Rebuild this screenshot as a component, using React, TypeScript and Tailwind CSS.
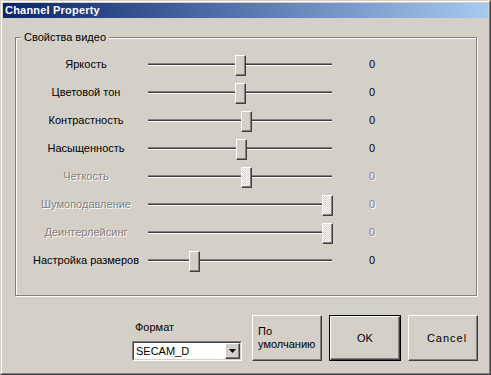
import React from "react";

type Row = { label: string; thumb: number; disabled?: boolean };

const rows: Row[] = [
  { label: "Яркость", thumb: 87 },
  { label: "Цветовой тон", thumb: 87 },
  { label: "Контрастность", thumb: 93 },
  { label: "Насыщенность", thumb: 88 },
  { label: "Четкость", thumb: 93, disabled: true },
  { label: "Шумоподавление", thumb: 174, disabled: true },
  { label: "Деинтерлейсинг", thumb: 174, disabled: true },
  { label: "Настройка размеров", thumb: 41 },
];

function Slider({ row }: { row: Row }) {
  return (
    <div className="relative w-[184px] h-[28px] flex items-center">
      <div className="w-full h-[3px] border-t border-b border-t-[#808080] border-b-white bg-[#404040]" />
      <div
        className={
          "absolute top-[5px] w-[11px] h-[21px] border border-t-white border-l-white border-r-[#404040] border-b-[#404040] shadow-[inset_-1px_-1px_0_#808080] " +
          (row.disabled
            ? "bg-[image:repeating-conic-gradient(#ffffff_0_25%,#d4d0c8_0_50%)] bg-[length:2px_2px]"
            : "bg-[#d4d0c8]")
        }
        style={{ left: row.thumb }}
      />
    </div>
  );
}

export default function App() {
  const disabledText = "text-[#808080] [text-shadow:1px_1px_0_#ffffff]";
  return (
    <div className="w-[491px] h-[375px] bg-[#d4d0c8] font-['Liberation_Sans',Arial,sans-serif] text-[11px] leading-[13px] text-black border border-t-[#d4d0c8] border-l-[#d4d0c8] border-r-[#404040] border-b-[#404040]">
      <div className="h-full border border-t-white border-l-white border-r-[#808080] border-b-[#808080] p-[1px] flex flex-col">
        {/* Title bar */}
        <div className="h-[15px] flex items-center pl-[2px] bg-[linear-gradient(to_right,#0a246a,#a6caf0)]">
          <span className="text-white font-bold text-[11px] leading-[15px] tracking-[0.2px]">Channel Property</span>
        </div>

        {/* Content */}
        <div className="flex flex-col pl-[12px]">
          {/* Group box */}
          <div className="relative mt-[19px] w-[462px] h-[259px] border border-[#808080] shadow-[inset_1px_1px_0_#ffffff,1px_1px_0_#ffffff]">
            <span className="absolute -top-[7px] left-[5px] px-[3px] bg-[#d4d0c8] leading-[13px]">Свойства видео</span>
            <div className="flex flex-col pt-[12px] pl-[16px]">
              {rows.map((r) => (
                <div key={r.label} className="flex items-center h-[28px]">
                  <div className={"w-[108px] text-center whitespace-nowrap " + (r.disabled ? disabledText : "")}>
                    {r.label}
                  </div>
                  <div className="ml-[8px]">
                    <Slider row={r} />
                  </div>
                  <div className={"ml-[37px] " + (r.disabled ? disabledText : "")}>0</div>
                </div>
              ))}
            </div>
          </div>

          {/* Bottom row */}
          <div className="flex items-start mt-[19px] ml-[117px]">
            <div className="flex flex-col w-[110px] mr-[10px]">
              <div className="mt-[6px] pl-[3px]">Формат</div>
              <div className="mt-[7px] w-[110px] h-[20px] border border-t-[#808080] border-l-[#808080] border-r-white border-b-white">
                <div className="h-full flex items-center bg-white border border-t-[#404040] border-l-[#404040] border-r-[#d4d0c8] border-b-[#d4d0c8]">
                  <span className="flex-1 pl-[2px]">SECAM_D</span>
                  <div className="w-[15px] h-[16px] flex items-center justify-center bg-[#d4d0c8] border border-t-white border-l-white border-r-[#404040] border-b-[#404040] shadow-[inset_-1px_-1px_0_#808080]">
                    <svg width="7" height="4" viewBox="0 0 7 4">
                      <path d="M0 0h7L3.5 4z" fill="#000" />
                    </svg>
                  </div>
                </div>
              </div>
            </div>

            <div className="w-[70px] h-[46px] flex items-center pl-[5px] text-left border border-t-white border-l-white border-r-[#404040] border-b-[#404040] shadow-[inset_-1px_-1px_0_#808080]">
              <div>
                По
                <br />
                умолчанию
              </div>
            </div>

            <div className="ml-[7px] w-[72px] h-[46px] border border-black">
              <div className="h-full flex items-center justify-center border border-t-white border-l-white border-r-[#404040] border-b-[#404040] shadow-[inset_-1px_-1px_0_#808080]">
                OK
              </div>
            </div>

            <div className="ml-[7px] w-[70px] h-[46px] flex items-center justify-center pl-[8px] tracking-[1px] border border-t-white border-l-white border-r-[#404040] border-b-[#404040] shadow-[inset_-1px_-1px_0_#808080]">
              Cancel
            </div>
          </div>
        </div>
      </div>
    </div>
  );
}
